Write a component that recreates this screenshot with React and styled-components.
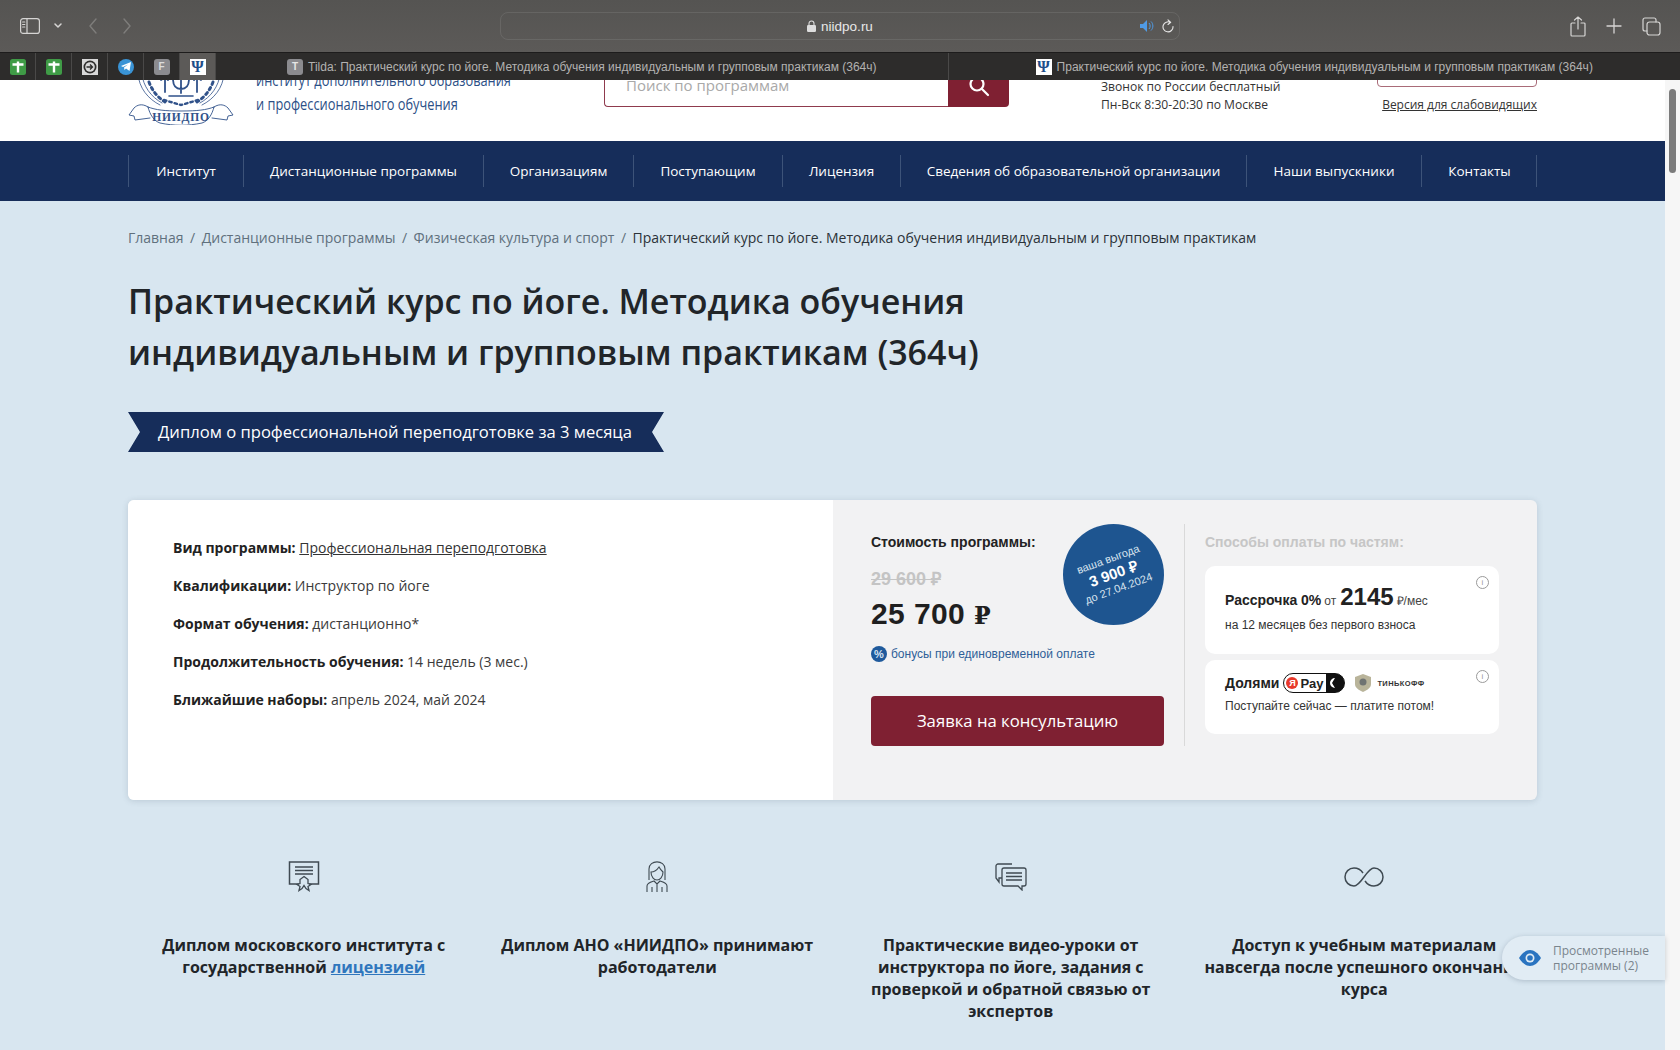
import styled, { createGlobalStyle } from "styled-components"

const GlobalStyle = createGlobalStyle`
  html, body {
    margin: 0;
    padding: 0;
    height: 100%;
    overflow: hidden;
  }
  * { box-sizing: border-box; }
  body {
    font-family: "Open Sans", "Liberation Sans", sans-serif;
    color: #212529;
  }
`

const NAVY = "#162d5a"
const WINE = "#7f2032"

const Screen = styled.div`
  width: 1680px;
  height: 1050px;
  display: flex;
  flex-direction: column;
  overflow: hidden;
  position: relative;
`

/* --- safari --- */
const Toolbar = styled.div`
  height: 52px;
  flex: none;
  background: linear-gradient(#555452, #5c5a58);
  display: flex;
  align-items: center;
  padding: 0 19px 0 20px;
  color: #d6d5d4;
`
const ToolIcons = styled.div`
  display: flex;
  align-items: center;
  width: 480px;
  flex: none;
`
const AddressBar = styled.div`
  width: 680px;
  height: 28px;
  border: 1px solid rgba(255,255,255,0.09);
  border-radius: 8px;
  display: grid;
  grid-template-columns: 1fr auto 1fr;
  align-items: center;
  font: 13.5px "Liberation Sans", sans-serif;
  color: #e8e8e8;
`
const AddressText = styled.div`
  display: flex;
  align-items: center;
  gap: 5px;
`
const AddressEnd = styled.div`
  display: flex;
  justify-content: flex-end;
  align-items: center;
  gap: 7px;
  padding-right: 5px;
`
const ToolRight = styled.div`
  margin-left: auto;
  display: flex;
  align-items: center;
  gap: 20px;
`
const TabBar = styled.div`
  height: 28px;
  flex: none;
  background: #2d2c2b;
  border-top: 1px solid #1d1c1c;
  display: flex;
`
const PinTab = styled.div`
  width: 36px;
  flex: none;
  display: flex;
  align-items: center;
  justify-content: center;
  border-right: 1px solid #4a4948;
  background: ${p => p.$active ? "#5c5a58" : "transparent"};
  svg { display: block; }
`
const Tab = styled.div`
  flex: 1;
  min-width: 0;
  display: flex;
  align-items: center;
  justify-content: center;
  gap: 5px;
  font: 12px "Liberation Sans", sans-serif;
  color: #b3b2b1;
  white-space: nowrap;
  & + & { border-left: 1px solid #4a4948; }
`
const Favicon = styled.div`
  width: 16px;
  height: 16px;
  border-radius: ${p => p.$round ? "50%" : p.$square ? "0" : "3px"};
  background: ${p => p.$bg};
  color: ${p => p.$color || "#fff"};
  display: flex;
  align-items: center;
  justify-content: center;
  font: bold ${p => p.$size || 10}px ${p => p.$serif ? '"Liberation Serif", serif' : '"Liberation Sans", sans-serif'};
`

/* --- page --- */
const Viewport = styled.div`
  flex: 1;
  min-height: 0;
  display: flex;
`
const Page = styled.div`
  width: 1665px;
  flex: none;
  background: #d8e6f0;
`
const ScrollTrack = styled.div`
  flex: 1;
  background: #f6f6f6;
  padding: 9px 4px 0;
`
const ScrollThumb = styled.div`
  height: 84px;
  border-radius: 4px;
  background: #7b7b7b;
`
const Header = styled.header`
  height: 61px;
  background: #fff;
  overflow: hidden;
  display: flex;
  align-items: flex-end;
  padding: 0 128px 15px;
`
const LogoBox = styled.div`
  width: 106px;
  flex: none;
  margin-bottom: 1px;
  svg { display: block; }
`
const LogoText = styled.div`
  width: 348px;
  margin: 0 0 10px 22px;
  flex: none;
  font-size: 16px;
  line-height: 24px;
  color: #2c4f86;
  white-space: nowrap;
  span {
    display: block;
    transform: scaleX(0.8);
    transform-origin: left center;
  }
`
const SearchBox = styled.div`
  width: 405px;
  height: 50px;
  flex: none;
  margin-bottom: 19px;
  display: flex;
`
const SearchInput = styled.div`
  flex: 1;
  border: 1px solid #8f3a4d;
  border-right: 0;
  border-radius: 4px 0 0 4px;
  padding: 6px 21px 0;
  display: flex;
  align-items: center;
  font-size: 15px;
  color: #a9a9a9;
`
const SearchButton = styled.div`
  width: 61px;
  background: ${WINE};
  border-radius: 0 4px 4px 0;
  display: flex;
  align-items: center;
  justify-content: center;
  padding-top: 8px;
`
const PhoneInfo = styled.div`
  width: 276px;
  margin: 0 0 12px 92px;
  flex: none;
  font-size: 12.1px;
  line-height: 18px;
  color: #333;
  white-space: nowrap;
`
const HeaderSide = styled.div`
  width: 160px;
  flex: none;
  margin-bottom: 12px;
  display: flex;
  flex-direction: column;
  align-items: flex-end;
  font-size: 12px;
  line-height: 18px;
`
const CallButton = styled.div`
  width: 160px;
  height: 30px;
  margin-bottom: 9px;
  border: 1px solid #a96b78;
  border-radius: 4px;
`
const SightLink = styled.a`
  color: #333;
  text-decoration: underline;
  white-space: nowrap;
`
const Nav = styled.nav`
  height: 60px;
  background: ${NAVY};
  padding: 14px 128px 0;
`
const NavList = styled.div`
  display: flex;
  height: 32px;
  border-right: 1px solid #3d5379;
  width: 1409px;
`
const NavItem = styled.a`
  flex: none;
  display: flex;
  align-items: center;
  justify-content: center;
  border-left: 1px solid #3d5379;
  width: ${p => p.$w}px;
  color: #fff;
  font-size: 13.5px;
  font-weight: 500;
  white-space: nowrap;
  padding-bottom: 1px;
`
const Main = styled.main`
  padding: 26px 128px 0;
`
const Crumbs = styled.div`
  display: flex;
  gap: 6.5px;
  font-size: 14px;
  line-height: 22px;
  color: #60707d;
  white-space: nowrap;
  b {
    font-weight: 400;
    color: #2b3238;
  }
`
const Title = styled.h1`
  margin: 27px 0 0;
  font-size: 34px;
  line-height: 51px;
  font-weight: 600;
  color: #212529;
  width: 1000px;
`
const Ribbon = styled.div`
  margin-top: 34px;
  width: 536px;
  height: 40px;
  background: ${NAVY};
  color: #fff;
  font-size: 16.6px;
  font-weight: 500;
  display: flex;
  align-items: center;
  padding: 0 0 1px 30px;
  white-space: nowrap;
  clip-path: polygon(0 0, 100% 0, calc(100% - 12px) 50%, 100% 100%, 0 100%, 12px 50%);
`
const Card = styled.section`
  margin-top: 48px;
  height: 300px;
  display: flex;
  border-radius: 6px;
  overflow: hidden;
  background: #f2f2f3;
  box-shadow: 0 1px 6px rgba(70,90,110,0.2);
`
const CardInfo = styled.div`
  width: 705px;
  flex: none;
  background: #fff;
  padding: 37px 45px;
  display: flex;
  flex-direction: column;
  gap: 16px;
  font-size: 14px;
  line-height: 22px;
  color: #3b3b3b;
`
const InfoRow = styled.div`
  b { font-weight: 700; color: #222; }
  a { color: #333; text-decoration: underline; }
`
const PricePane = styled.div`
  flex: 1;
  display: flex;
  padding: 24px 38px 0;
  font-family: "Liberation Sans", Arial, sans-serif;
`
const PriceCol = styled.div`
  width: 293px;
  height: 222px;
  flex: none;
  display: flex;
  flex-direction: column;
  position: relative;
`
const PriceLabel = styled.div`
  margin-top: 9px;
  font-size: 14px;
  line-height: 18px;
  font-weight: 700;
  color: ${p => p.$muted ? "#c6c6c6" : "#222"};
`
const OldPrice = styled.div`
  margin-top: 18px;
  font-size: 18px;
  line-height: 20px;
  font-weight: 700;
  color: #c4c4c4;
  text-decoration: line-through;
`
const NewPrice = styled.div`
  margin-top: 6px;
  font-size: 30px;
  line-height: 38px;
  font-weight: 700;
  color: #1f1f1f;
  letter-spacing: 0.4px;
  span {
    font-family: "DejaVu Serif", serif;
    font-size: 24px;
  }
`
const Bonus = styled.div`
  margin-top: 11px;
  display: flex;
  align-items: center;
  gap: 4px;
  font-size: 12px;
  line-height: 16px;
  color: #2f5f98;
`
const BonusDot = styled.span`
  width: 16px;
  height: 16px;
  border-radius: 50%;
  background: #1f5a9c;
  color: #d5e3f2;
  display: flex;
  align-items: center;
  justify-content: center;
  font-size: 11px;
  font-weight: 700;
`
const ApplyButton = styled.a`
  margin-top: auto;
  height: 50px;
  padding-bottom: 2px;
  background: ${WINE};
  border-radius: 4px;
  color: #fff;
  display: flex;
  align-items: center;
  justify-content: center;
  font: 500 16.7px "Open Sans", sans-serif;
`
const Badge = styled.div`
  position: absolute;
  right: 0;
  top: 0;
  width: 101px;
  height: 101px;
  border-radius: 50%;
  background: #1e5590;
  color: #d9e4ef;
  display: flex;
  flex-direction: column;
  align-items: center;
  justify-content: center;
  text-align: center;
  font-size: 11px;
  line-height: 14px;
  padding-bottom: 2px;
  > div { transform: rotate(-20deg); white-space: nowrap; }
  strong { display: block; font-size: 15px; line-height: 17px; color: #fff; }
`
const PartsCol = styled.div`
  width: 315px;
  margin-left: 20px;
  height: 222px;
  border-left: 1px solid #d9d9d9;
  padding-left: 20px;
`
const PartCard = styled.div`
  position: relative;
  margin-top: ${p => p.$mt}px;
  width: 294px;
  height: ${p => p.$h}px;
  background: #fff;
  border-radius: 10px;
  padding: ${p => p.$pt}px 20px 0;
`
const InfoMark = styled.span`
  position: absolute;
  right: 10px;
  top: ${p => p.$top}px;
  width: 13px;
  height: 13px;
  border: 1px solid #9a9a9a;
  border-radius: 50%;
  color: #9a9a9a;
  font-size: 8px;
  line-height: 11px;
  text-align: center;
`
const PartHead = styled.div`
  display: flex;
  align-items: baseline;
  gap: 3px;
  font-size: 14px;
  font-weight: 700;
  color: #222;
  white-space: nowrap;
  small { font-size: 12px; font-weight: 400; color: #444; }
  strong { font-size: 24px; line-height: 28px; margin: 0 0 0 1px; }
`
const PartNote = styled.div`
  margin-top: ${p => p.$mt}px;
  font-size: 12px;
  line-height: 16px;
  color: #333;
  white-space: nowrap;
`
const DolyamiRow = styled.div`
  display: flex;
  align-items: center;
  font-size: 14px;
  font-weight: 700;
  color: #222;
`
const PayPill = styled.div`
  margin-left: 4px;
  width: 62px;
  height: 20px;
  border: 1.5px solid #111;
  border-radius: 10px;
  overflow: hidden;
  display: flex;
  align-items: center;
  font-size: 13px;
  font-weight: 700;
  background: linear-gradient(90deg, #fff 70%, #111 70%);
  svg { margin-left: 2px; }
`
const YaDot = styled.span`
  width: 12px;
  height: 12px;
  margin: 0 2px 0 2px;
  border-radius: 50%;
  background: #e8392b;
  color: #fff;
  font-size: 9px;
  line-height: 12px;
  text-align: center;
`
const TinkoffMark = styled.div`
  margin-left: 8px;
  display: flex;
  align-items: center;
  gap: 4px;
  font-size: 7.5px;
  letter-spacing: 0.4px;
  font-weight: 700;
  color: #333;
`
const Features = styled.section`
  margin: 57px -4px 0 -1px;
  display: grid;
  grid-template-columns: repeat(4, 1fr);
`
const Feature = styled.div`
  display: flex;
  flex-direction: column;
  align-items: center;
  text-align: center;
  padding: 0 10px;
  color: #212529;
  font-size: 16px;
  line-height: 22px;
  font-weight: 700;
  a { color: #2f76bd; text-decoration: underline; }
`
const FeatureIcon = styled.div`
  height: 40px;
  margin-bottom: 37px;
  display: flex;
  align-items: center;
  svg { display: block; }
`
const Viewed = styled.div`
  position: absolute;
  left: 1502px;
  top: 936px;
  width: 163px;
  height: 44px;
  border-radius: 22px 0 0 22px;
  background: #e1ecf4;
  box-shadow: 0 1px 5px rgba(60,80,100,0.28);
  display: flex;
  align-items: center;
  gap: 12px;
  padding-left: 17px;
  font-size: 12px;
  line-height: 15px;
  color: #7a858d;
`

const stroke = { fill: "none", stroke: "currentColor", strokeLinecap: "round", strokeLinejoin: "round" }

function SidebarIcon() {
  return (
    <svg width="20" height="16" viewBox="0 0 20 16" style={stroke} strokeWidth="1.2">
      <rect x="0.6" y="0.6" width="18.8" height="14.8" rx="2.5" />
      <path d="M7 1v14M2.6 4h2.2M2.6 6.5h2.2M2.6 9h2.2" />
    </svg>
  )
}

function LogoCrest() {
  return (
    <svg width="106" height="95" viewBox="0 0 106 95" fill="none" stroke="#31528a" strokeLinecap="round">
      <path d="M10 44c1 14 10 25 22 31M96 44c-1 14-10 25-22 31M14 44c1 12 9 23 20 29M92 44c-1 12-9 23-20 29" strokeWidth="0.8" />
      <path d="M21 52c3 8 8 15 16 20M85 52c-3 8-8 15-16 20" strokeWidth="3" strokeDasharray="2.500 3.500" />
      <path d="M53 46v17M45 49c0 7 3 10 8 10s8-3 8-10M37 48v14M69 48v14M33 50c3-2 5-2 7 0M66 50c2-2 4-2 7 0" strokeWidth="1.800" />
      <path d="M41 66h24" strokeWidth="1.600" />
      <path d="M36 70l17 5 17-5" strokeWidth="2.400" strokeDasharray="2.500 3" />
      <path d="M20 77c8 3 16 4 33 4s25-1 33-4M20 77c2 8 6 14 12 16 14 3 28 3 42 0 6-2 10-8 12-16" strokeWidth="0.900" />
      <path d="M20 77c-6-4-11-2-14 1l-5 7 5 1 1 4 15-2M86 77c6-4 11-2 14 1l5 7-5 1-1 4-15-2" strokeWidth="0.900" />
      <text x="53" y="91" textAnchor="middle" fill="#31528a" stroke="none" fontFamily="Liberation Serif, serif" fontWeight="700" fontSize="11.500" letterSpacing="0.800">НИИДПО</text>
    </svg>
  )
}

function DiplomaIcon() {
  return (
    <svg width="32" height="32" viewBox="0 0 32 32" fill="none" stroke="#3f4a52" strokeWidth="1.1">
      <path d="M11 23H1.5V1h29v22H21" strokeWidth="1.5" />
      <path d="M7 6h18M7 9.500h18M7 13h18" strokeWidth="1.6" />
      <path d="M16 15.500l4 3v4l3 1-3 2 1 4-3-2-2-3-2 3-3 2 1-4-3-2 3-1v-4z" strokeWidth="1.300" />
    </svg>
  )
}

function WomanIcon() {
  return (
    <svg width="22" height="32" viewBox="0 0 22 32" fill="none" stroke="#3f4a52" strokeWidth="1.100">
      <path d="M3 19V8c0-9.500 16-9.500 16 0v11" />
      <path d="M5 11c3 0 6-2 8-5 1 2 3 4 4 5 0 5-3 8-6 8s-6-3-6-8z" />
      <path d="M1 31v-6c0-3 4-4 7-5l3 3 3-3c3 1 7 2 7 5v6M11 23v8M6 26v5M16 26v5" />
    </svg>
  )
}

function ChatIcon() {
  return (
    <svg width="32" height="28" viewBox="0 0 32 28" fill="none" stroke="#3f4a52" strokeWidth="1.300">
      <path d="M17 1H3C2 1 1 2 1 3v12l3 4v-4h3" />
      <path d="M9 5h20c1 0 2 1 2 2v14c0 1-1 2-2 2h-2v4l-4-4H9c-1 0-2-1-2-2V7c0-1 1-2 2-2z" />
      <path d="M11 10h16M11 13.500h16M11 17h16" strokeWidth="1.600" />
    </svg>
  )
}

function InfinityIcon() {
  return (
    <svg width="40" height="20" viewBox="0 0 40 20" fill="none" stroke="#3f4a52" strokeWidth="1.500">
      <path d="M19 6C17 3 14 1 10 1 5 1 1 5 1 10s4 9 9 9c7 0 13-18 20-18 5 0 9 4 9 9s-4 9-9 9c-4 0-7-2-9-5" />
    </svg>
  )
}

function PlusFavicon() {
  return (
    <svg width="16" height="16" viewBox="0 0 16 16">
      <rect width="16" height="16" rx="2.500" fill="#3f9b46" />
      <path d="M2.500 5.500h11M8 2.500v11" stroke="#fff" strokeWidth="2.400" />
    </svg>
  )
}

function ArrowFavicon() {
  return (
    <svg width="16" height="16" viewBox="0 0 16 16">
      <rect width="16" height="16" fill="#d8d8d8" />
      <circle cx="8" cy="8" r="6.500" fill="#2d2c2b" />
      <circle cx="8" cy="8" r="4.800" fill="#d8d8d8" />
      <path d="M4.500 8h6M8 5.500L10.500 8 8 10.500" fill="none" stroke="#2d2c2b" strokeWidth="1.300" />
    </svg>
  )
}

const navItems = [
  ["Институт", 115],
  ["Дистанционные программы", 240],
  ["Организациям", 150],
  ["Поступающим", 149],
  ["Лицензия", 118],
  ["Сведения об образовательной организации", 346],
  ["Наши выпускники", 175],
  ["Контакты", 116],
]

const infoRows = [
  ["Квалификации:", "Инструктор по йоге"],
  ["Формат обучения:", "дистанционно*"],
  ["Продолжительность обучения:", "14 недель (3 мес.)"],
  ["Ближайшие наборы:", "апрель 2024, май 2024"],
]

const tabTitle = "Практический курс по йоге. Методика обучения индивидуальным и групповым практикам (364ч)"

function PsiFavicon() {
  return <Favicon $bg="#fff" $color="#1d4e89" $square $serif $size={16}>Ψ</Favicon>
}

export default function App() {
  return (
    <Screen>
      <GlobalStyle />
      <Toolbar>
        <ToolIcons>
          <SidebarIcon />
          <svg width="8" height="6" viewBox="0 0 8 6" style={{ ...stroke, marginLeft: 14 }} strokeWidth="1.5"><path d="M1 1l3 3 3-3" /></svg>
          <svg width="10" height="16" viewBox="0 0 10 16" style={{ ...stroke, marginLeft: 26, color: "#7e7d7b" }} strokeWidth="1.4"><path d="M8 1L2 8l6 7" /></svg>
          <svg width="10" height="16" viewBox="0 0 10 16" style={{ ...stroke, marginLeft: 24, color: "#7e7d7b" }} strokeWidth="1.4"><path d="M2 1l6 7-6 7" /></svg>
        </ToolIcons>
        <AddressBar>
          <span />
          <AddressText>
            <svg width="9" height="12" viewBox="0 0 9 12"><path d="M2 5V3.500a2.500 2.500 0 0 1 5 0V5" fill="none" stroke="#ddd" strokeWidth="1.1" /><rect y="5" width="9" height="7" rx="1.2" fill="#ddd" /></svg>
            niidpo.ru
          </AddressText>
          <AddressEnd>
            <svg width="15" height="12" viewBox="0 0 15 12"><path d="M0 4h3l4-4v12L3 8H0z" fill="#4f9be6" /><path d="M9 3c1.500 1.500 1.500 4.500 0 6M11 1.500c2.500 2.500 2.500 6.500 0 9" fill="none" stroke="#4f9be6" strokeWidth="1" /></svg>
            <svg width="12" height="14" viewBox="0 0 12 14" style={stroke} strokeWidth="1.1"><path d="M8.500 3.500A5 5 0 1 0 11 7.500M6 .8l2.700 2.500L6 5.500" /></svg>
          </AddressEnd>
        </AddressBar>
        <ToolRight>
          <svg width="16" height="21" viewBox="0 0 16 21" style={stroke} strokeWidth="1.2"><path d="M5 7H2c-.6 0-1 .4-1 1v11c0 .6.400 1 1 1h12c.6 0 1-.4 1-1V8c0-.6-.4-1-1-1h-3M8 13V1M4.500 4L8 1l3.500 3" /></svg>
          <svg width="16" height="16" viewBox="0 0 16 16" style={stroke} strokeWidth="1.3"><path d="M8 1v14M1 8h14" /></svg>
          <svg width="19" height="19" viewBox="0 0 19 19" style={stroke} strokeWidth="1.2"><rect x="5" y="5" width="13" height="13" rx="2.500" /><path d="M14 5V3c0-1.200-.8-2-2-2H3C1.800 1 1 1.800 1 3v9c0 1.200.8 2 2 2h2" /></svg>
        </ToolRight>
      </Toolbar>
      <TabBar>
        <PinTab><PlusFavicon /></PinTab>
        <PinTab><PlusFavicon /></PinTab>
        <PinTab><ArrowFavicon /></PinTab>
        <PinTab>
          <Favicon $bg="#3a94d6" $round>
            <svg width="10" height="9" viewBox="0 0 10 9"><path d="M0 4l10-4-1.500 9L5 6.500 3.500 8 3 5.500l4-3L2 5z" fill="#fff" /></svg>
          </Favicon>
        </PinTab>
        <PinTab><Favicon $bg="#8b8b8f" $color="#ddd">F</Favicon></PinTab>
        <PinTab $active><PsiFavicon /></PinTab>
        <Tab><Favicon $bg="#8b8b8f" $color="#e6e6e6">T</Favicon>Tilda: {tabTitle}</Tab>
        <Tab><PsiFavicon />{tabTitle}</Tab>
      </TabBar>
      <Viewport>
        <Page>
          <Header>
            <LogoBox><LogoCrest /></LogoBox>
            <LogoText>
              <span>институт дополнительного образования</span>
              <span>и профессионального обучения</span>
            </LogoText>
            <SearchBox>
              <SearchInput>Поиск по программам</SearchInput>
              <SearchButton>
                <svg width="22" height="22" viewBox="0 0 22 22" fill="none" stroke="#fff" strokeWidth="2.200" strokeLinecap="round"><circle cx="9" cy="9" r="6.500" /><path d="M14 14l6 6" /></svg>
              </SearchButton>
            </SearchBox>
            <PhoneInfo>
              <div>Звонок по России бесплатный</div>
              <div>Пн-Вск 8:30-20:30 по Москве</div>
            </PhoneInfo>
            <HeaderSide>
              <CallButton />
              <SightLink>Версия для слабовидящих</SightLink>
            </HeaderSide>
          </Header>
          <Nav>
            <NavList>
              {navItems.map(([name, w]) => <NavItem key={name} $w={w}>{name}</NavItem>)}
            </NavList>
          </Nav>
          <Main>
            <Crumbs>
              <span>Главная</span><span>/</span>
              <span>Дистанционные программы</span><span>/</span>
              <span>Физическая культура и спорт</span><span>/</span>
              <b>Практический курс по йоге. Методика обучения индивидуальным и групповым практикам</b>
            </Crumbs>
            <Title>Практический курс по йоге. Методика обучения индивидуальным и групповым практикам (364ч)</Title>
            <Ribbon>Диплом о профессиональной переподготовке за 3 месяца</Ribbon>
            <Card>
              <CardInfo>
                <InfoRow><b>Вид программы:</b> <a>Профессиональная переподготовка</a></InfoRow>
                {infoRows.map(([k, v]) => <InfoRow key={k}><b>{k}</b> {v}</InfoRow>)}
              </CardInfo>
              <PricePane>
                <PriceCol>
                  <PriceLabel>Стоимость программы:</PriceLabel>
                  <OldPrice>29 600 ₽</OldPrice>
                  <NewPrice>25 700 <span>₽</span></NewPrice>
                  <Bonus><BonusDot>%</BonusDot>бонусы при единовременной оплате</Bonus>
                  <ApplyButton>Заявка на консультацию</ApplyButton>
                  <Badge>
                    <div>
                      ваша выгода
                      <strong>3 900 ₽</strong>
                      до 27.04.2024
                    </div>
                  </Badge>
                </PriceCol>
                <PartsCol>
                  <PriceLabel $muted>Способы оплаты по частям:</PriceLabel>
                  <PartCard $mt={15} $h={88} $pt={17}>
                    <InfoMark $top={10}>i</InfoMark>
                    <PartHead>Рассрочка 0% <small>от</small> <strong>2145</strong> <small>₽/мес</small></PartHead>
                    <PartNote $mt={6}>на 12 месяцев без первого взноса</PartNote>
                  </PartCard>
                  <PartCard $mt={6} $h={74} $pt={13}>
                    <InfoMark $top={10}>i</InfoMark>
                    <DolyamiRow>
                      Долями
                      <PayPill>
                        <YaDot>Я</YaDot>Pay
                        <svg width="12" height="14" viewBox="0 0 12 14"><path d="M9 2a5 5 0 1 0 0 10l-3-5z" fill="#fff" /></svg>
                      </PayPill>
                      <TinkoffMark>
                        <svg width="20" height="18" viewBox="0 0 20 18"><path d="M10 0l8 3v7c0 4-4 6-8 8-4-2-8-4-8-8V3z" fill="#b9b49a" /><circle cx="10" cy="8" r="3.500" fill="#6f7372" /></svg>
                        ТИНЬКОФФ
                      </TinkoffMark>
                    </DolyamiRow>
                    <PartNote $mt={5}>Поступайте сейчас — платите потом!</PartNote>
                  </PartCard>
                </PartsCol>
              </PricePane>
            </Card>
            <Features>
              <Feature>
                <FeatureIcon><DiplomaIcon /></FeatureIcon>
                <div>Диплом московского института с государственной <a>лицензией</a></div>
              </Feature>
              <Feature>
                <FeatureIcon><WomanIcon /></FeatureIcon>
                <div>Диплом АНО «НИИДПО» принимают работодатели</div>
              </Feature>
              <Feature>
                <FeatureIcon><ChatIcon /></FeatureIcon>
                <div>Практические видео-уроки от инструктора по йоге, задания с проверкой и обратной связью от экспертов</div>
              </Feature>
              <Feature>
                <FeatureIcon><InfinityIcon /></FeatureIcon>
                <div>Доступ к учебным материалам навсегда после успешного окончания курса</div>
              </Feature>
            </Features>
          </Main>
        </Page>
        <ScrollTrack><ScrollThumb /></ScrollTrack>
      </Viewport>
      <Viewed>
        <svg width="22" height="16" viewBox="0 0 22 16">
          <path d="M0 8c3-5 7-8 11-8s8 3 11 8c-3 5-7 8-11 8S3 13 0 8z" fill="#2a74c0" />
          <circle cx="11" cy="8" r="4.500" fill="#e1ecf4" />
          <circle cx="11" cy="8" r="2.800" fill="#2a74c0" />
        </svg>
        <div>Просмотренные<br />программы (2)</div>
      </Viewed>
    </Screen>
  )
}
